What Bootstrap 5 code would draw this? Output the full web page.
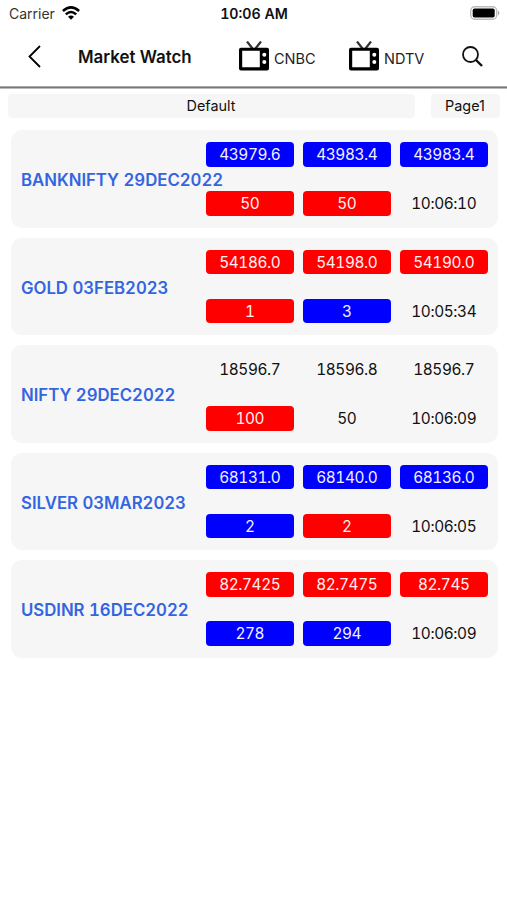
<!DOCTYPE html>
<html lang="en">
<head>
<meta charset="utf-8">
<meta name="viewport" content="width=device-width, initial-scale=1">
<title>Market Watch</title>
<link href="https://cdn.jsdelivr.net/npm/bootstrap@5.3.0/dist/css/bootstrap.min.css" rel="stylesheet">
<style>
body{font-family:Inter,"Liberation Sans",sans-serif;color:#111;background:#fff;font-size:15.5px;line-height:24px;overflow-x:hidden}
svg{display:block;flex:none}
.status-bar{height:27px;padding:0 7px 0 9px;font-size:14px;display:grid;grid-template-columns:1fr auto 1fr}
.clock{font-weight:600;font-size:14.2px;font-variant-numeric:tabular-nums;margin-left:-1px}
.carrier{color:#333}
.top-bar{height:59px;padding:0 24px 0 28px}
.screen-title{font-size:16.9px;font-weight:600;margin-left:37px;width:161px;white-space:nowrap}
.channel{width:110px;font-size:14.5px;gap:5px;color:#222}
.channel span{padding-top:5px}
.channel svg{margin-top:-1px}
.rule-line{height:3px;background:linear-gradient(#c4c4c4,#777 50%,#ddd)}
.tabs-line{padding:5px 7px 0 8px;gap:16px;font-size:14.4px}
.chip{background:#f6f6f6;border-radius:4px;height:24px}
.chip-wide{padding-right:1px}
.chip-page{width:69px;padding-right:1px}
.watch-list{padding:12.3px 9.5px 0 11px;gap:10px}
.quote{background:#f6f6f6;border-radius:11px;height:97.5px;padding:0 9.5px 0 10px;font-variant-numeric:tabular-nums}
.symbol{color:#3465e0;font-size:16.8px;line-height:26px;padding-top:2px;font-weight:600;width:185px;white-space:nowrap;letter-spacing:-.03px}
.values{display:grid;grid-template-columns:repeat(3,87.5px);gap:24.5px 9.5px}
.values>div{height:24.5px;line-height:26px;border-radius:4px;text-align:center;font-size:15.4px;letter-spacing:-.4px}
.up{background:#00f;color:#f0f0ff}
.down{background:#f00;color:#fff0f0}
</style>
</head>
<body>
<svg width="0" height="0" class="position-absolute" aria-hidden="true">
<symbol id="tv" viewBox="0 0 30 30"><path d="M8 .5 13.500 7.500 M22 .5 16.500 7.500" fill="none" stroke="#333" stroke-width="2.200"/><path fill-rule="evenodd" d="M2 6.700H28Q30 6.700 30 8.700V27.500Q30 29.500 28 29.500H2Q0 29.500 0 27.500V8.700Q0 6.700 2 6.700ZM3.200 9.800V26.300H20.800V9.800Z" fill="#000"/><circle cx="25.300" cy="13.800" r="2" fill="#fff"/><circle cx="25.300" cy="21" r="2" fill="#fff"/></symbol>
</svg>
<header>
<div class="status-bar align-items-center">
<div class="d-flex align-items-center gap-2 carrier"><span>Carrier</span>
<svg width="18" height="14" viewBox="0 0 18 14" style="margin:-2px 0 0 -1px"><g fill="none" stroke="#000" stroke-width="2.500"><path d="M.9 5Q9-2.200 17.100 5"/><path d="M3.800 8.400Q9 3.700 14.200 8.400"/></g><path d="M6 10.800Q9 8.200 12 10.800L9 13.700Z"/></svg></div>
<div class="clock">10:06 AM</div>
<svg class="ms-auto" width="30" height="14" viewBox="0 0 30 14" style="margin-top:-1px"><rect x=".7" y=".7" width="26" height="12.600" rx="4" fill="#fff" stroke="#bbb" stroke-width="1.400"/><rect x="2.700" y="2.500" width="22" height="9" rx="1.800"/><path d="M28 4.500Q31 7 28 9.500Z" fill="#aaa"/></svg>
</div>
<nav class="top-bar d-flex align-items-center">
<svg width="13" height="23" viewBox="0 0 13 23"><path d="M12 1 1.500 11.500 12 22" fill="none" stroke="#000" stroke-width="1.800"/></svg>
<div class="screen-title">Market Watch</div>
<div class="channel d-flex align-items-center"><svg width="30" height="30"><use href="#tv"/></svg><span>CNBC</span></div>
<div class="channel d-flex align-items-center"><svg width="30" height="30"><use href="#tv"/></svg><span>NDTV</span></div>
<svg class="ms-auto" width="21" height="21" viewBox="0 0 21 21"><circle cx="8.500" cy="8.500" r="7.500" fill="none" stroke="#111" stroke-width="1.800"/><path d="m14 14 6 6" stroke="#111" stroke-width="2.400"/></svg>
</nav>
<div class="rule-line"></div>
</header>
<main>
<div class="tabs-line d-flex text-center"><div class="chip chip-wide flex-fill">Default</div><div class="chip chip-page">Page1</div></div>
<div class="watch-list d-flex flex-column">
<section class="quote d-flex align-items-center"><div class="symbol">BANKNIFTY 29DEC2022</div><div class="values"><div class="up">43979.6</div><div class="up">43983.4</div><div class="up">43983.4</div><div class="down">50</div><div class="down">50</div><div>10:06:10</div></div></section>
<section class="quote d-flex align-items-center"><div class="symbol">GOLD 03FEB2023</div><div class="values"><div class="down">54186.0</div><div class="down">54198.0</div><div class="down">54190.0</div><div class="down">1</div><div class="up">3</div><div>10:05:34</div></div></section>
<section class="quote d-flex align-items-center"><div class="symbol">NIFTY 29DEC2022</div><div class="values"><div>18596.7</div><div>18596.8</div><div>18596.7</div><div class="down">100</div><div>50</div><div>10:06:09</div></div></section>
<section class="quote d-flex align-items-center"><div class="symbol">SILVER 03MAR2023</div><div class="values"><div class="up">68131.0</div><div class="up">68140.0</div><div class="up">68136.0</div><div class="up">2</div><div class="down">2</div><div>10:06:05</div></div></section>
<section class="quote d-flex align-items-center"><div class="symbol">USDINR 16DEC2022</div><div class="values"><div class="down">82.7425</div><div class="down">82.7475</div><div class="down">82.745</div><div class="up">278</div><div class="up">294</div><div>10:06:09</div></div></section>
</div>
</main>
<script src="https://cdn.jsdelivr.net/npm/bootstrap@5.3.0/dist/js/bootstrap.bundle.min.js"></script>
</body>
</html>
